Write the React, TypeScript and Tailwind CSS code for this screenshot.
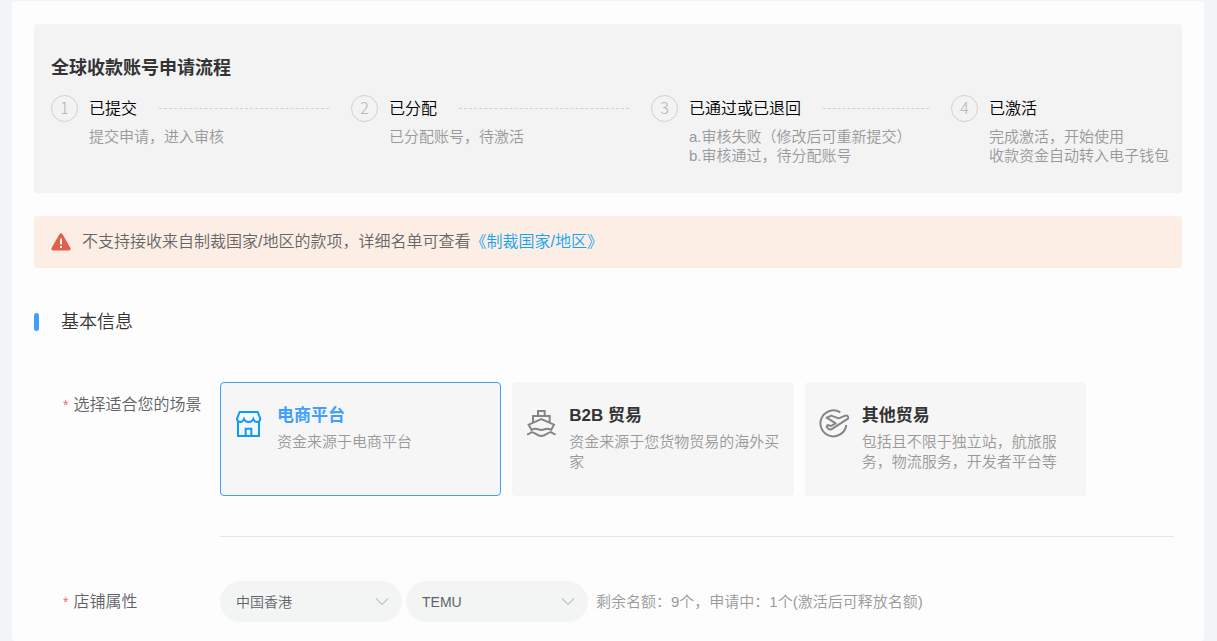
import { useState, type ReactNode } from "react";

const steps = [
  { title: "已提交", lines: ["提交申请，进入审核"] },
  { title: "已分配", lines: ["已分配账号，待激活"] },
  { title: "已通过或已退回", lines: ["a.审核失败（修改后可重新提交）", "b.审核通过，待分配账号"] },
  { title: "已激活", lines: ["完成激活，开始使用", "收款资金自动转入电子钱包"] },
];

function StoreIcon() {
  return (
    <svg viewBox="0 0 90 90" className="size-[30px]" fill="none" stroke="#0a9bfb" strokeWidth="6" aria-hidden="true">
      <path d="M17 12h54l8 20c0 6-5 10-10 10s-9-4-11-9c-2 5-8 9-14 9s-12-4-14-9c-2 5-6 9-11 9S9 38 9 32z" />
      <path d="M12 40v44h63V40M35 84V62h17v22" />
    </svg>
  );
}

function ShipIcon() {
  return (
    <svg viewBox="0 0 90 90" className="size-[30px]" fill="none" stroke="#858585" strokeWidth="6" aria-hidden="true">
      <path d="M36 23V9h20v14M21 43V24h50v19" />
      <path d="M18 68L8 50l38-17 38 17-10 18" />
      <path d="M3 79c8 0 9-6 15-6 9 0 15 11 28 11s19-11 28-11c6 0 7 6 15 6M18 65c11-8 18 1 28 1s17-9 28-1" />
    </svg>
  );
}

function PlaneIcon() {
  return (
    <svg viewBox="0 0 90 90" className="size-[30px]" fill="none" stroke="#858585" strokeWidth="6" strokeLinejoin="round" aria-hidden="true">
      <path d="M64 13A39 39 0 1 0 82 51" />
      <path d="M23 29l14-6 22 8 20-8c6-2 11 4 8 9L37 64c-5 2-9 0-14-7l3-6 10 3 14-8z" />
    </svg>
  );
}

const scenes: { id: string; title: string; text: string; icon: ReactNode }[] = [
  { id: "shop", title: "电商平台", text: "资金来源于电商平台", icon: <StoreIcon /> },
  { id: "b2b", title: "B2B 贸易", text: "资金来源于您货物贸易的海外买家", icon: <ShipIcon /> },
  { id: "other", title: "其他贸易", text: "包括且不限于独立站，航旅服务，物流服务，开发者平台等", icon: <PlaneIcon /> },
];

function PillSelect({ label, options }: { label: string; options: string[] }) {
  return (
    <div className="grid w-[182px] items-center">
      <select
        aria-label={label}
        className="col-start-1 row-start-1 h-[41px] w-full appearance-none rounded-full bg-[#f3f5f5] px-4 text-sm text-[#606266]"
      >
        {options.map((o) => (
          <option key={o}>{o}</option>
        ))}
      </select>
      <svg
        viewBox="0 0 14 14"
        className="pointer-events-none col-start-1 row-start-1 mr-[13px] size-[14px] justify-self-end"
        fill="none"
        stroke="#c0c4cc"
        strokeWidth="1.2"
        aria-hidden="true"
      >
        <path d="M1 3.5l6 6 6-6" />
      </svg>
    </div>
  );
}

export default function App() {
  const [scene, setScene] = useState("shop");
  return (
    <div className="min-h-screen bg-[#f3f4f7] px-3 pt-px font-['Liberation_Sans','Noto_Sans_CJK_SC',sans-serif] font-[350]">
      <main className="mr-px min-h-[640px] rounded bg-[#fdfdfd] px-[22px] pt-[23px]">
        <section className="rounded bg-[#f3f3f3] pt-8 pr-[13px] pb-7 pl-[17px]">
          <h1 className="text-lg leading-6 font-bold text-[#333]">全球收款账号申请流程</h1>
          <ol className="mt-[15px] grid grid-cols-[1fr_1fr_1fr_218px]">
            {steps.map((s, i) => (
              <li key={s.title}>
                <div className="flex items-center">
                  <span className="flex size-[27px] shrink-0 items-center justify-center rounded-full border border-[#d0d0d0] pb-[3px] font-['Noto_Sans_CJK_SC',sans-serif] text-base leading-6 font-light text-[#b0b0b0]">
                    {i + 1}
                  </span>
                  <span className="ml-[11px] shrink-0 text-base leading-6 text-black">{s.title}</span>
                  {i < 3 && <span className="mx-[22px] grow border-t border-dashed border-[#d0d0d0]" />}
                </div>
                <div className="mt-[5px] pl-[38px] text-[15px] leading-[19px] whitespace-nowrap text-[#999]">
                  {s.lines.map((l) => (
                    <p key={l}>{l}</p>
                  ))}
                </div>
              </li>
            ))}
          </ol>
        </section>

        <section className="mt-[23px] flex h-[52px] items-center rounded bg-[#fceee5] px-[17px] text-base text-[#666]">
          <svg viewBox="0 0 20 18" className="h-[18px] w-5" aria-hidden="true">
            <path
              d="M8.6 1.1c.6-1 2.2-1 2.8 0l7.9 13.6c.8 1.4 0 2.8-1.5 2.8H2.2c-1.5 0-2.3-1.4-1.5-2.8z"
              fill="#e0604b"
            />
            <path d="M10 5.5v6M10 13v2" stroke="#fff" strokeWidth="1.8" />
          </svg>
          <p className="ml-[11px]">
            不支持接收来自制裁国家/地区的款项，详细名单可查看
            <a href="#list" className="text-[#14a4f0]">
              《制裁国家/地区》
            </a>
          </p>
        </section>

        <h2 className="mt-[42px] flex items-center text-lg leading-6 text-[#333]">
          <span className="mr-[22px] h-[18px] w-[5px] rounded-sm bg-[#409eff]" />
          基本信息
        </h2>

        <form className="mt-12 pr-2 pl-[29px]">
          <div className="flex">
            <span id="scene-label" className="flex w-[157px] shrink-0 gap-[5px] pt-[11px] text-base leading-6 text-[#606266]">
              <span className="text-sm leading-6 text-[#f56c6c]">*</span>选择适合您的场景
            </span>
            <div className="grow border-b border-[#e4e4e4] pb-10">
              <div role="radiogroup" aria-labelledby="scene-label" className="mr-[88px] grid grid-cols-3 gap-[11px]">
                {scenes.map((s) => (
                  <label
                    key={s.id}
                    className={
                      "relative flex h-[114px] rounded border bg-[#f6f6f6] pt-[21px] pr-3 pl-[13px] " +
                      (scene === s.id ? "border-[#409eff]" : "border-[#f6f6f6]")
                    }
                  >
                    <input
                      type="radio"
                      name="scene"
                      className="sr-only"
                      checked={scene === s.id}
                      onChange={() => setScene(s.id)}
                    />
                    <span className="mt-1 shrink-0">{s.icon}</span>
                    <span className="ml-[13px] flex flex-col">
                      <span
                        className={
                          "text-[17px] leading-6 font-bold " + (scene === s.id ? "text-[#409eff]" : "text-[#333]")
                        }
                      >
                        {s.title}
                      </span>
                      <span className="mt-1 text-[15px] leading-5 text-[#999]">{s.text}</span>
                    </span>
                  </label>
                ))}
              </div>
            </div>
          </div>

          <div className="mt-11 flex items-center">
            <span className="flex w-[157px] shrink-0 gap-[5px] text-base leading-6 text-[#606266]">
              <span className="text-sm leading-6 text-[#f56c6c]">*</span>店铺属性
            </span>
            <div className="flex items-center gap-1">
              <PillSelect label="地区" options={["中国香港"]} />
              <PillSelect label="平台" options={["TEMU"]} />
              <p className="ml-1 text-[15px] leading-6 text-[#999]">剩余名额：9个，申请中：1个(激活后可释放名额)</p>
            </div>
          </div>
        </form>
      </main>
    </div>
  );
}
